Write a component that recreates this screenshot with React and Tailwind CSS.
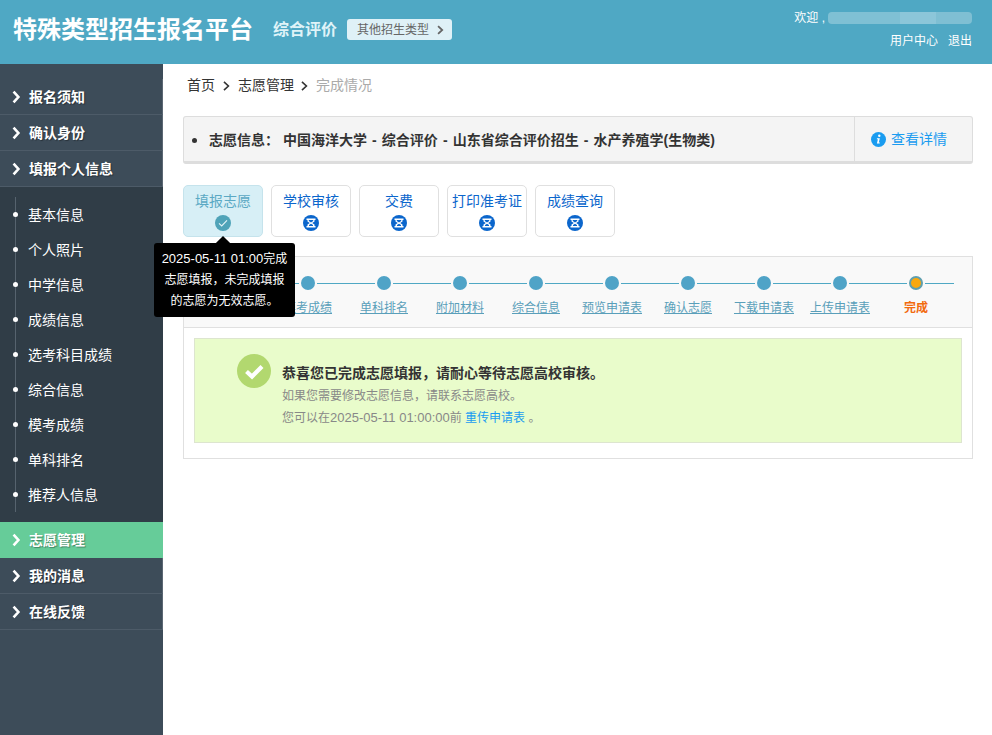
import React from "react";

const font = { fontFamily: '"Liberation Sans", "Noto Sans CJK SC", sans-serif' };

const subItems = ["基本信息", "个人照片", "中学信息", "成绩信息", "选考科目成绩", "综合信息", "模考成绩", "单科排名", "推荐人信息"];
const tabs = ["学校审核", "交费", "打印准考证", "成绩查询"];
const steps = ["填报志愿", "模考成绩", "单科排名", "附加材料", "综合信息", "预览申请表", "确认志愿", "下载申请表", "上传申请表"];

const Chevron = ({ w = 7, h = 10, sw = 2, className = "" }) => (
  <svg width={w} height={h} viewBox={`0 0 ${w} ${h}`} className={`shrink-0 ${className}`}>
    <path d={`M${sw * 0.6} ${sw * 0.6}L${w - sw} ${h / 2}L${sw * 0.6} ${h - sw * 0.6}`} fill="none" stroke="currentColor" strokeWidth={sw} />
  </svg>
);

const NavItem = ({ label, active }) => (
  <a
    className={`flex h-9 items-center border-b pt-[1px] pl-[12px] font-bold text-[14px] text-white [text-shadow:1px_1px_1px_rgba(0,0,0,0.35)] ${
      active ? "border-[#66cc99] bg-[#66cc99]" : "border-[#4d5b68] border-r-[#5b6773] border-r"
    }`}
  >
    <Chevron w={9} h={14} sw={2.6} className="mr-[8px]" />
    {label}
  </a>
);

const Hourglass = () => (
  <svg width="16" height="16" viewBox="0 0 16 16" className="mx-auto">
    <circle cx="8" cy="8" r="8" fill="#0b66cc" />
    <path d="M3.5 3.5h9V5h-1v1.5L9.2 8l2.3 1.5V11h1v1.5h-9V11h1V9.5L6.8 8 4.5 6.5V5h-1z" fill="#fff" />
    <path d="M5.8 5h4.4v1L8 7.4 5.8 6zM8 8.8L10 10v1H6v-1z" fill="#0b66cc" />
  </svg>
);

const Step = ({ label, done = true }) => (
  <div className="flex flex-col items-center">
    <div className="flex w-full items-center gap-[2px]">
      <span className="h-px flex-1 bg-[#4fa8c4]" />
      {done ? (
        <span className="h-[14px] w-[14px] rounded-full bg-[#4fa3c7]" />
      ) : (
        <span className="h-[14px] w-[14px] rounded-full border-2 border-[#5f9fae] bg-[#f9a80e]" />
      )}
      <span className="h-px flex-1 bg-[#4fa8c4]" />
    </div>
    {done ? (
      <a className="mt-[9px] text-[12px] leading-[18px] whitespace-nowrap text-[#5a9fba] underline">{label}</a>
    ) : (
      <span className="mt-[9px] text-[12px] leading-[18px] font-bold text-[#f26b10]">{label}</span>
    )}
  </div>
);

export default function App() {
  return (
    <div className="flex h-[735px] flex-col overflow-hidden bg-white" style={font}>
      <header className="flex h-16 shrink-0 items-start justify-between bg-[#4fa8c4] pr-[20px] pl-[13px] text-white">
        <div className="flex h-[59px] items-center">
          <h1 className="text-[24px] font-bold whitespace-nowrap">特殊类型招生报名平台</h1>
          <span className="ml-[20px] text-[16px] font-bold text-[#dff3f8]">综合评价</span>
          <button className="ml-[10px] flex h-[21px] w-[105px] items-center gap-[8px] rounded-[3px] bg-[#dff1f7] pl-[10px] text-[12px] text-[#666]">
            其他招生类型
            <Chevron w={7} h={10} sw={1.8} />
          </button>
        </div>
        <div className="flex flex-col items-end text-[12px]">
          <div className="mt-[9px] flex h-[18px] items-center">
            <span>欢迎 ,</span>
            <span className="ml-[3px] flex h-3 w-[144px] overflow-hidden rounded-[4px]">
              <span className="w-[72px] bg-[#7fc0d4]" />
              <span className="w-[36px] bg-[#8cc6d9]" />
              <span className="flex-1 bg-[#7fbfd3]" />
            </span>
          </div>
          <div className="mt-[5px] flex gap-[10px]">
            <a>用户中心</a>
            <a>退出</a>
          </div>
        </div>
      </header>

      <div className="flex flex-1">
        <aside className="w-[163px] shrink-0 bg-[#3d4c59] pt-[15px]">
          {["报名须知", "确认身份", "填报个人信息"].map((item) => (
            <NavItem key={item} label={item} />
          ))}
          <div className="bg-[#303d47] py-[10px]">
            <ul className="ml-[15px] border-l border-[#56636e]">
              {subItems.map((item) => (
                <li key={item} className="relative flex h-[35px] items-center pt-[1px] pl-[12px] text-[14px] text-white">
                  <span className="absolute top-[15px] left-[-3px] h-[5px] w-[5px] rounded-full bg-white" />
                  {item}
                </li>
              ))}
            </ul>
          </div>
          <NavItem label="志愿管理" active />
          <NavItem label="我的消息" />
          <NavItem label="在线反馈" />
        </aside>

        <main className="relative w-[790px] pl-[20px]">
          <nav className="flex h-[42px] items-center pt-[1px] pl-[4px] text-[14px] text-[#333]">
            首页
            <Chevron w={7} h={10} sw={1.6} className="mr-[8px] ml-[8px]" />
            志愿管理
            <Chevron w={7} h={10} sw={1.6} className="mr-[8px] ml-[7px]" />
            <span className="text-[#aaa]">完成情况</span>
          </nav>

          <div className="mt-[10px] flex h-[48px] w-[790px] items-stretch rounded-[3px] border border-b-[3px] border-[#ddd] bg-[#f4f4f4]">
            <div className="flex flex-1 items-center pt-[2px] pl-[8px] text-[14px] font-bold text-[#333]">
              <span className="mr-[12px] h-[5px] w-[5px] rounded-full bg-[#333]" />
              <span>志愿信息：</span>
              <span className="ml-[4px] [word-spacing:1.2px]">中国海洋大学 - 综合评价 - 山东省综合评价招生 - 水产养殖学(生物类)</span>
            </div>
            <a className="flex w-[118px] items-center gap-[5px] border-l border-[#ddd] pl-[16px] text-[14px] text-[#1a9cf0]">
              <svg width="15" height="15" viewBox="0 0 15 15">
                <circle cx="7.5" cy="7.5" r="7.5" fill="#1a9cf0" />
                <circle cx="8.3" cy="3.8" r="1.2" fill="#fff" />
                <path d="M6 6.2h2.8L7.8 10.6h1.1l-.3 1H5.9l1-4.4H5.8z" fill="#fff" />
              </svg>
              查看详情
            </a>
          </div>

          <div className="mt-[21px] flex gap-[8px]">
            <div className="h-[52px] w-[80px] rounded-[5px] border border-[#c5e3ec] bg-[#d7eff6] pt-[5px] text-center text-[14px] leading-[20px] text-[#5ba9c4]">
              填报志愿
              <svg width="16" height="16" viewBox="0 0 16 16" className="mx-auto mt-[4px]">
                <circle cx="8" cy="8" r="8" fill="#4fa3b8" />
                <path d="M4 8.3l2.7 2.6 5.3-5.5" fill="none" stroke="#e3f3f7" strokeWidth="1.1" />
              </svg>
            </div>
            {tabs.map((tab) => (
              <div key={tab} className="h-[52px] w-[80px] rounded-[5px] border border-[#e0e0e0] pt-[5px] text-center text-[14px] leading-[20px] whitespace-nowrap text-[#0b66cc]">
                {tab}
                <div className="mt-[4px]">
                  <Hourglass />
                </div>
              </div>
            ))}
          </div>

          <section className="mt-[19px] h-[203px] w-[790px] border border-[#e0e0e0]">
            <div className="h-[71px] border-b border-[#e0e0e0] bg-[#f9f9f9] pt-[19px] pl-[10px]">
              <div className="grid w-[760px] grid-cols-10">
                {steps.map((step) => (
                  <Step key={step} label={step} />
                ))}
                <Step label="完成" done={false} />
              </div>
            </div>
            <div className="mx-[10px] mt-[10px] flex h-[105px] border border-[#dde5cf] bg-[#e9fccb] pl-[42px]">
              <svg width="34" height="34" viewBox="0 0 34 34" className="mt-[15px] shrink-0">
                <circle cx="17" cy="17" r="17" fill="#b2d86f" />
                <path d="M9.5 17.5l5.5 5 10-10" fill="none" stroke="#fff" strokeWidth="4.2" />
              </svg>
              <div className="mt-[23px] ml-[11px] text-[12px] leading-[22px] text-[#888]">
                <p className="mb-[1px] text-[14px] font-bold text-[#333]">恭喜您已完成志愿填报，请耐心等待志愿高校审核。</p>
                <p>如果您需要修改志愿信息，请联系志愿高校。</p>
                <p>
                  您可以在<span className="text-[13px]">2025-05-11 01:00:00</span>前 <a className="text-[#1a9cf0]">重传申请表</a> 。
                </p>
              </div>
            </div>
          </section>

          <div className="absolute top-[179px] left-[-9px] w-[141px] rounded-[3px] bg-black pt-[5px] pb-[5px] text-center text-[12px] leading-[21px] text-white">
            <span className="absolute top-[-5px] left-[64px] h-[10px] w-[10px] rotate-45 bg-black" />
            <p className="relative whitespace-nowrap"><span className="text-[13px]">2025-05-11 01:00</span>完成</p>
            <p className="relative">志愿填报，未完成填报</p>
            <p className="relative">的志愿为无效志愿。</p>
          </div>
        </main>
      </div>
    </div>
  );
}
